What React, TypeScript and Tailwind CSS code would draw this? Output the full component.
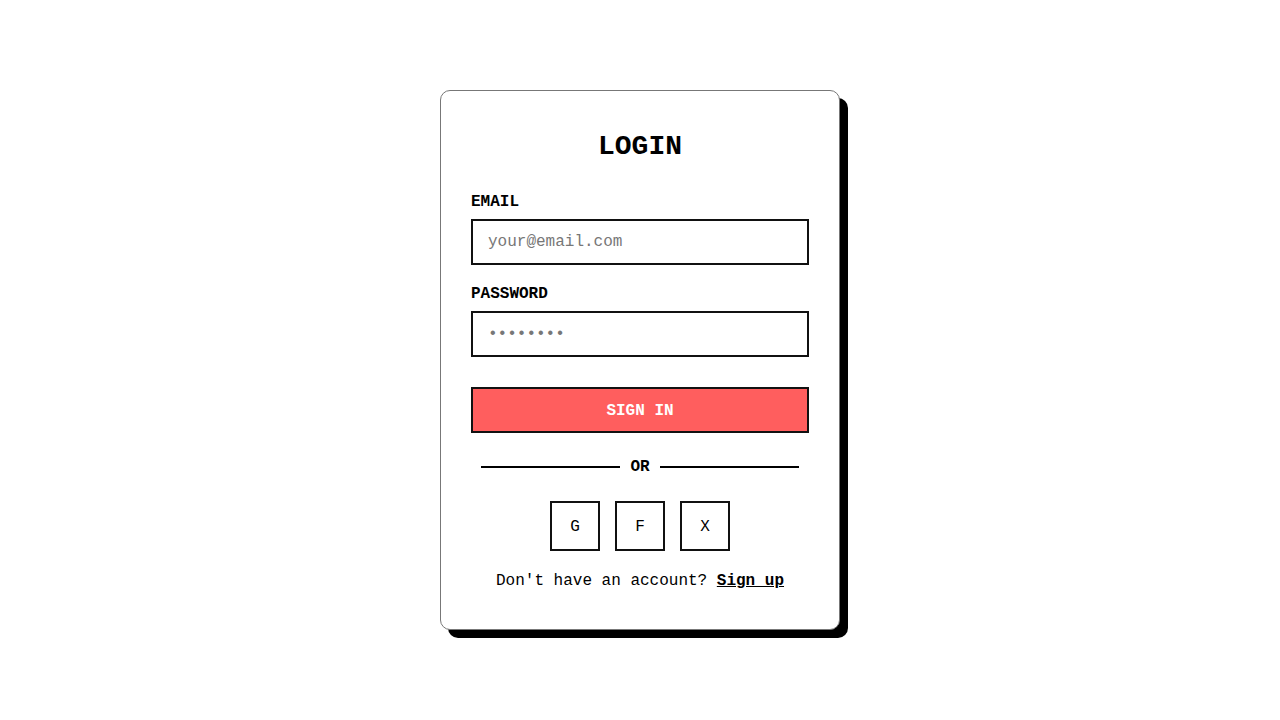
import { useState } from 'react';

const mono = "font-['Liberation_Mono','Courier_New',monospace]";

export default function App() {
  const [email, setEmail] = useState('');
  const [password, setPassword] = useState('');

  return (
    <div className={`flex min-h-screen w-full items-center justify-center bg-white ${mono} text-black`}>
      <div className="w-[400px] rounded-[10px] border border-[#777] bg-white px-[30px] pt-[39px] pb-[36px] shadow-[8px_8px_0_#000]">
        <h1 className="mb-[25px] text-center text-[28px] font-bold leading-[34px]">LOGIN</h1>

        {/* Email */}
        <div className="mb-[16px]">
          <label className="mb-[4px] block text-[16px] font-bold leading-[26px]">EMAIL</label>
          <input
            type="email"
            value={email}
            onChange={(e) => setEmail(e.target.value)}
            placeholder="your@email.com"
            className="block h-[46px] w-full border-2 border-[#111] bg-white px-[15px] text-[16px] leading-[20px] outline-none placeholder:text-[#777]"
          />
        </div>

        {/* Password */}
        <div>
          <label className="mb-[4px] block text-[16px] font-bold leading-[26px]">PASSWORD</label>
          <input
            type="password"
            value={password}
            onChange={(e) => setPassword(e.target.value)}
            placeholder="••••••••"
            className="block h-[46px] w-full border-2 border-[#111] bg-white px-[15px] text-[16px] leading-[20px] outline-none placeholder:text-[#777]"
          />
        </div>

        <button className="mt-[30px] block h-[46px] w-full border-2 border-[#111] bg-[#ff5e5e] pt-[2px] text-[16px] font-bold leading-[20px] text-white">
          SIGN IN
        </button>

        {/* Divider */}
        <div className="mx-[10px] mt-[22px] flex items-center gap-[10px]">
          <div className="h-[2px] flex-1 bg-black" />
          <span className="text-[16px] font-bold leading-[24px]">OR</span>
          <div className="h-[2px] flex-1 bg-black" />
        </div>

        {/* Social */}
        <div className="mt-[22px] flex justify-center gap-[15px]">
          {['G', 'F', 'X'].map((s) => (
            <button
              key={s}
              className="flex h-[50px] w-[50px] items-center justify-center border-2 border-[#111] bg-white pt-[2px] text-[16px]"
            >
              {s}
            </button>
          ))}
        </div>

        <p className="mt-[18px] text-center text-[16px] leading-[24px]">
          Don't have an account?{' '}
          <a href="#" className="font-bold underline">
            Sign up
          </a>
        </p>
      </div>
    </div>
  );
}
